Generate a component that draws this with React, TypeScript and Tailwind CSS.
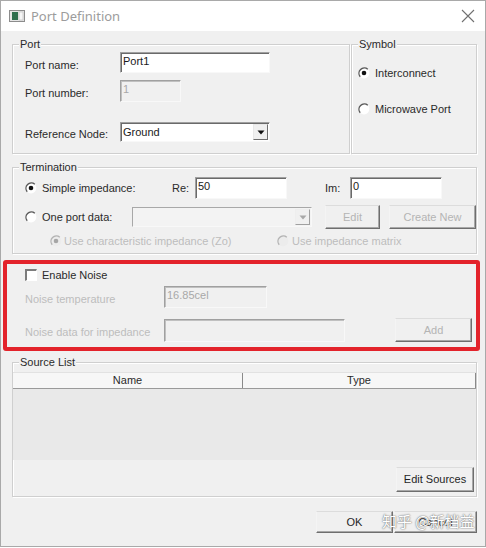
import React from "react";

function Radio({ checked, disabled }: { checked?: boolean; disabled?: boolean }) {
  const dark = disabled ? "#b4b4b4" : "#5a5a5a";
  return (
    <svg width="12" height="12" viewBox="0 0 12 12" className="shrink-0">
      <circle cx="6" cy="6" r="5.4" fill={disabled ? "#ececec" : "#ffffff"} />
      <path d="M2.2 9.8A5.4 5.4 0 0 1 9.8 2.2" fill="none" stroke={dark} strokeWidth="1.4" />
      {checked && <circle cx="6" cy="6" r="2.3" fill={disabled ? "#a6a6a6" : "#111111"} />}
    </svg>
  );
}

function Check() {
  return (
    <span className="block w-[12px] h-[12px] shrink-0 bg-white border-t-2 border-l-2 border-b border-r border-t-[#7c7c7c] border-l-[#7c7c7c] border-b-white border-r-white" />
  );
}

function Field({
  w,
  h,
  value,
  disabled,
  children,
}: {
  w: string;
  h: string;
  value?: string;
  disabled?: boolean;
  children?: React.ReactNode;
}) {
  return (
    <div
      className={`${w} ${h} relative shrink-0 flex items-start pt-[2px] pl-[2px] border-t border-l border-b border-r border-t-[#a0a0a0] border-l-[#a0a0a0] border-b-[#f8f8f8] border-r-[#f8f8f8] ${
        disabled
          ? "bg-[#f0f0f0] text-[#a8a8a8] shadow-[inset_1px_1px_0_#c0c0c0]"
          : "bg-white text-[#1a1a1a] shadow-[inset_1px_1px_0_#6a6a6a]"
      }`}
    >
      <span className="leading-[13px]">{value}</span>
      {children}
    </div>
  );
}

function Btn({
  w,
  h,
  children,
  disabled,
}: {
  w: string;
  h: string;
  children: React.ReactNode;
  disabled?: boolean;
}) {
  return (
    <div
      className={`${w} ${h} shrink-0 flex items-center justify-center bg-[#f0f0f0] border border-t-[#dcdcdc] border-l-[#f4f4f4] border-r-[#6e6e6e] border-b-[#6e6e6e] shadow-[inset_-1px_-1px_0_#a8a8a8] ${
        disabled ? "text-[#b4b4b4]" : "text-[#1f1f1f]"
      }`}
    >
      {children}
    </div>
  );
}

function Group({
  label,
  className,
  children,
}: {
  label: string;
  className: string;
  children?: React.ReactNode;
}) {
  return (
    <div className={`relative shrink-0 border border-[#cfcfcf] shadow-[inset_1px_1px_0_#ffffff,1px_1px_0_#ffffff] ${className}`}>
      <span className="absolute -top-[7px] left-[6px] bg-[#f0f0f0] px-[1px] leading-[13px] text-[#2a2a2a]">
        {label}
      </span>
      {children}
    </div>
  );
}

function Label({ w, children, disabled }: { w: string; children: React.ReactNode; disabled?: boolean }) {
  return (
    <span className={`${w} shrink-0 pt-[5px] leading-[13px] ${disabled ? "text-[#bdbdbd]" : "text-[#2a2a2a]"}`}>
      {children}
    </span>
  );
}

function Arrow({ color }: { color: string }) {
  return (
    <svg width="8" height="5" viewBox="0 0 8 5">
      <path d="M0.5 0.5H7.5L4 4.5Z" fill={color} />
    </svg>
  );
}

export default function App() {
  return (
    <div className="w-[486px] h-[548px] bg-white font-['Liberation_Sans',Arial,sans-serif] text-[11px]">
      <div className="h-[547px] border border-[#a9a9a9] flex flex-col">
        {/* Title bar */}
        <div className="h-[30px] shrink-0 bg-white flex items-center pl-[8px] pr-[8px]">
          <svg width="16" height="12" viewBox="0 0 16 12" className="shrink-0">
            <rect x="0.5" y="0.5" width="15" height="11" fill="#e6e6e6" stroke="#8c8c8c" />
            <rect x="3" y="2" width="6" height="8" fill="#2f6f4e" />
            <rect x="10" y="2" width="4" height="8" fill="#f6f6f6" stroke="#bdbdbd" strokeWidth="0.6" />
          </svg>
          <span className="ml-[6px] font-['Noto_Sans',sans-serif] text-[13px] text-[#9c9c9c] leading-[16px]">
            Port Definition
          </span>
          <div className="flex-1" />
          <svg width="14" height="14" viewBox="0 0 14 14" className="mr-[2px]">
            <path d="M1 1L13 13M13 1L1 13" stroke="#707070" strokeWidth="1.1" />
          </svg>
        </div>

        {/* Client area */}
        <div className="relative flex-1 bg-[#f0f0f0] pl-[11px] flex flex-col">
          {/* Row 1 */}
          <div className="mt-[13px] flex">
            <Group label="Port" className="w-[338px] h-[110px]">
              <div className="pl-[12px] pt-[7px] flex flex-col">
                <div className="flex items-center h-[21px]">
                  <Label w="w-[95px]">Port name:</Label>
                  <Field w="w-[150px]" h="h-[21px]" value="Port1" />
                </div>
                <div className="mt-[7px] flex items-center h-[22px]">
                  <Label w="w-[95px]">Port number:</Label>
                  <Field w="w-[61px]" h="h-[22px]" value="1" disabled />
                </div>
                <div className="mt-[20px] flex items-center h-[20px]">
                  <Label w="w-[95px]">Reference Node:</Label>
                  <div className="w-[150px] h-[20px] flex items-center pl-[2px] bg-white border-t border-l border-b border-r border-t-[#a0a0a0] border-l-[#a0a0a0] border-b-[#f8f8f8] border-r-[#f8f8f8] shadow-[inset_1px_1px_0_#6a6a6a] text-[#1a1a1a]">
                    <span className="flex-1 leading-[13px]">Ground</span>
                    <div className="w-[15px] h-[16px] mr-[1px] flex items-center justify-center bg-[#f0f0f0] border border-t-[#e8e8e8] border-l-[#e8e8e8] border-r-[#6e6e6e] border-b-[#6e6e6e]">
                      <Arrow color="#111" />
                    </div>
                  </div>
                </div>
              </div>
            </Group>
            <Group label="Symbol" className="ml-[1px] w-[126px] h-[110px]">
              <div className="pl-[6px] flex flex-col">
                <div className="mt-[21px] flex items-center h-[14px]">
                  <Radio checked />
                  <span className="ml-[5px] text-[#2a2a2a] leading-[13px]">Interconnect</span>
                </div>
                <div className="mt-[22px] flex items-center h-[14px]">
                  <Radio />
                  <span className="ml-[5px] text-[#2a2a2a] leading-[13px]">Microwave Port</span>
                </div>
              </div>
            </Group>
          </div>

          {/* Termination */}
          <Group label="Termination" className="mt-[13px] w-[465px] h-[87px]">
            <div className="pl-[12px] pt-[9px] flex flex-col">
              <div className="flex items-center h-[22px]">
                <Radio checked />
                <span className="ml-[5px] w-[130px] text-[#2a2a2a] leading-[13px]">Simple impedance:</span>
                <span className="w-[23px] text-[#2a2a2a] leading-[13px]">Re:</span>
                <Field w="w-[92px]" h="h-[22px]" value="50" />
                <span className="ml-[38px] w-[25px] text-[#2a2a2a] leading-[13px]">Im:</span>
                <Field w="w-[92px]" h="h-[22px]" value="0" />
              </div>
              <div className="mt-[6px] flex items-center h-[24px]">
                <Radio />
                <span className="ml-[5px] w-[90px] text-[#2a2a2a] leading-[13px]">One port data:</span>
                <div className="w-[180px] h-[20px] flex items-center justify-end bg-[#f3f3f3] border-t border-l border-b border-r border-t-[#a8a8a8] border-l-[#a8a8a8] border-b-[#f8f8f8] border-r-[#f8f8f8]">
                  <div className="w-[15px] h-[16px] mr-[1px] flex items-center justify-center bg-[#f0f0f0] border border-t-[#eeeeee] border-l-[#eeeeee] border-r-[#a0a0a0] border-b-[#a0a0a0]">
                    <Arrow color="#a8a8a8" />
                  </div>
                </div>
                <div className="ml-[13px]">
                  <Btn w="w-[55px]" h="h-[24px]" disabled>
                    Edit
                  </Btn>
                </div>
                <div className="ml-[9px]">
                  <Btn w="w-[87px]" h="h-[24px]" disabled>
                    Create New
                  </Btn>
                </div>
              </div>
              <div className="mt-[5px] flex items-center h-[14px]">
                <div className="ml-[25px] w-[227px] flex items-center">
                  <Radio checked disabled />
                  <span className="ml-[2px] text-[#bdbdbd] leading-[13px]">Use characteristic impedance (Zo)</span>
                </div>
                <Radio disabled />
                <span className="ml-[3px] text-[#bdbdbd] leading-[13px]">Use impedance matrix</span>
              </div>
            </div>
          </Group>

          {/* Noise */}
          <div className="pl-[13px] flex flex-col">
            <div className="mt-[15px] flex items-center h-[12px]">
              <Check />
              <span className="ml-[5px] text-[#2a2a2a] leading-[13px]">Enable Noise</span>
            </div>
            <div className="mt-[5px] flex items-center h-[22px]">
              <Label w="w-[139px]" disabled>
                Noise temperature
              </Label>
              <Field w="w-[103px]" h="h-[22px]" value="16.85cel" disabled />
            </div>
            <div className="mt-[10px] flex items-center h-[24px]">
              <Label w="w-[139px]" disabled>
                Noise data for impedance
              </Label>
              <Field w="w-[181px]" h="h-[23px]" disabled />
              <div className="ml-[50px]">
                <Btn w="w-[77px]" h="h-[24px]" disabled>
                  Add
                </Btn>
              </div>
            </div>
          </div>

          {/* Source List */}
          <Group label="Source List" className="mt-[20px] w-[465px] h-[135px]">
            <div className="mt-[9px] flex flex-col">
              <div className="h-[17px] flex bg-[#f7f7f7] border-t border-t-[#e2e2e2] border-b border-b-[#9a9a9a] text-[#2a2a2a]">
                <div className="w-[230px] flex items-center justify-center border-r border-r-[#8a8a8a] leading-[13px]">
                  Name
                </div>
                <div className="flex-1 flex items-center justify-center border-r border-r-[#8a8a8a] leading-[13px]">
                  Type
                </div>
              </div>
              <div className="h-[71px] bg-[#e9e9e9]" />
              <div className="mt-[7px] flex justify-end pr-[2px]">
                <Btn w="w-[78px]" h="h-[25px]">
                  Edit Sources
                </Btn>
              </div>
            </div>
          </Group>

          {/* Bottom buttons */}
          <div className="mt-[14px] w-[465px] flex justify-end">
            <Btn w="w-[77px]" h="h-[22px]">
              OK
            </Btn>
            <div className="ml-[1px]">
              <Btn w="w-[83px]" h="h-[22px]">
                Cancel
              </Btn>
            </div>
          </div>

          {/* Red annotation box */}
          <div className="absolute left-[2px] top-[229px] w-[477px] h-[91px] border-4 border-[#e3232b] rounded-[3px] pointer-events-none" />

          {/* Watermark */}
          <div className="absolute left-[381px] top-[481px] text-[15px] leading-[18px] text-white font-['Noto_Sans_CJK_SC','Noto_Sans',sans-serif] [text-shadow:0_0_1px_#666,0_0_2px_#888] whitespace-nowrap pointer-events-none">
            知乎 @新档益
          </div>
        </div>
      </div>
    </div>
  );
}
